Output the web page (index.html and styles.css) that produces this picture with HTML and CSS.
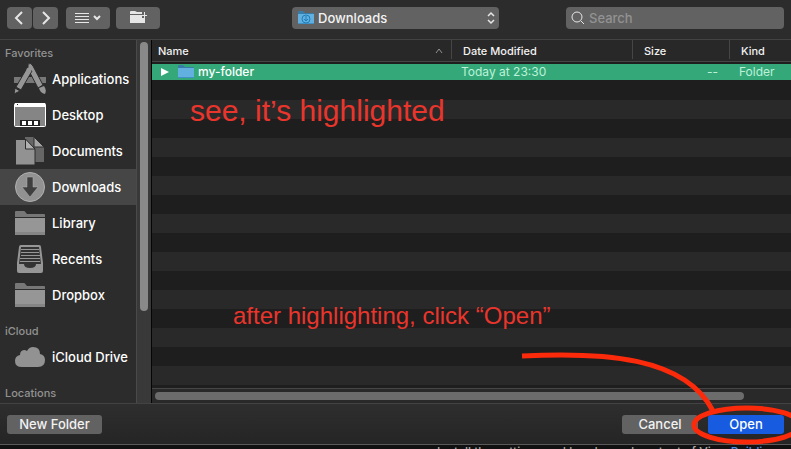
FILE: index.html
```html
<!DOCTYPE html>
<html lang="en">
<head>
<meta charset="utf-8">
<meta name="viewport" content="width=device-width, initial-scale=1">
<title>Open folder</title>
<link rel="stylesheet" href="styles.css">
</head>
<body>
<svg class="defs" aria-hidden="true">
  <symbol id="folder" viewBox="0 0 32 28">
    <path fill="#777" d="M1 8V3q0-1 1-1h8q1 0 2 2l1 1h17q1 0 1 1v2z"/>
    <path fill="#969696" d="M1 9h30v17H1z"/>
    <path fill="#858585" d="M1 23h30v2q0 1-1 1H2q-1 0-1-1z"/>
  </symbol>
  <symbol id="blue-folder" viewBox="0 0 16 14">
    <path fill="#377da8" d="M0 3V1q0-1 1-1h4l2 2h8q1 0 1 1v2H0z"/>
    <path fill="#62b0df" d="M0 3h16v10H0z"/>
    <path fill="#4291c4" d="M0 12h16v1H0z"/>
  </symbol>
</svg>
<main class="dialog">
  <header class="toolbar">
    <div class="nav">
      <button class="tool arrow" aria-label="Back"><svg width="24" height="22" viewBox="0 0 24 22"><path d="M15 5l-6 6 6 6"/></svg></button>
      <button class="tool arrow" aria-label="Forward"><svg width="24" height="22" viewBox="0 0 24 22"><path d="M10 5l6 6-6 6"/></svg></button>
    </div>
    <button class="tool wide" aria-label="View options"><svg width="44" height="22" viewBox="0 0 44 22"><path class="thin" d="M9 6.500h14M9 9.500h14M9 12.500h14M9 15.500h14"/><path d="M28 9l3 3 3-3"/></svg></button>
    <button class="tool wide" aria-label="New folder with selection"><svg width="44" height="22" viewBox="0 0 44 22"><path class="solid" d="M14 7V5q0-1 1-1h4l2 1h5v2zM14 8h12v3h3v5H14z"/><path class="thin" d="M28.500 5v6M26 8.500h5"/></svg></button>
    <div class="location">
      <svg class="location-icon" width="16" height="14" aria-hidden="true"><use href="#blue-folder"/><circle cx="8" cy="8" r="4" fill="none" stroke="#1c7fb9"/><path d="M8 5v5M6 8l2 2 2-2" fill="none" stroke="#1c7fb9"/></svg>
      <select aria-label="Location"><option>Downloads</option></select>
      <svg class="stepper" width="10" height="14" viewBox="0 0 10 14" aria-hidden="true"><path d="M2 5l3-3 3 3M2 9l3 3 3-3"/></svg>
    </div>
    <div class="search">
      <svg class="glass" width="14" height="14" viewBox="0 0 14 14" aria-hidden="true"><circle cx="6" cy="6" r="5"/><path d="M10 10l3 3"/></svg>
      <input type="search" placeholder="Search" aria-label="Search">
    </div>
  </header>
  <div class="body">
    <nav class="sidebar" aria-label="Places">
      <h2>Favorites</h2>
      <ul>
        <li><a href="#applications"><svg width="32" height="32" viewBox="0 0 32 32"><g fill="#969696"><path fill="#787878" d="M0 14h32v6H0z"/><path stroke="#2c2c2c" d="M14 1q3-2 5 2l10 19-5 3L14 6z"/><path d="M25 25l5-2q3 4 1 8-5-1-6-6z"/><path stroke="#2c2c2c" d="M13 5l5 3L7 27l-5-3zM1 25l5 3-6 3z"/><circle cx="15" cy="7" r="2.500"/></g></svg>Applications</a></li>
        <li><a href="#desktop"><svg width="32" height="32" viewBox="0 0 32 32"><rect x=".5" y="4.500" width="31" height="23" rx="1" fill="#858585" stroke="#fff"/><path fill="#fff" d="M1 4h30v4H1z"/><path fill="#222" d="M3 5h1v1H3zM6 21h20v6H6z"/><path fill="#fff" d="M8 22h4v4H8zM14 22h4v4h-4zM20 22h4v4h-4z"/></svg>Desktop</a></li>
        <li><a href="#documents"><svg width="32" height="32" viewBox="0 0 32 32"><path fill="#666" d="M11 2h9l10 10v15H11z"/><path fill="#a3a3a3" stroke="#2c2c2c" d="M20 2v10h10z"/><path fill="#929292" stroke="#2c2c2c" d="M1.500 4.500h10l9.500 9.500v16H1.500z"/><path fill="#b0b0b0" stroke="#2c2c2c" d="M11.500 4v10H21z"/></svg>Documents</a></li>
        <li class="current"><a href="#downloads" aria-current="page"><svg width="32" height="32" viewBox="0 0 32 32"><circle cx="16" cy="16" r="14.500" fill="#929292" stroke="#b0b0b0"/><path fill="#3f3f3f" stroke="#b0b0b0" stroke-width=".5" d="M13 6h6v10h5l-8 10-8-10h5z"/></svg>Downloads</a></li>
        <li><a href="#library"><svg width="32" height="28"><use href="#folder"/></svg>Library</a></li>
        <li><a href="#recents"><svg width="32" height="32" viewBox="0 0 32 32"><path fill="#969696" d="M7 2h18q2 0 2 2l2 16v8q0 2-2 2H5q-2 0-2-2v-8L5 4q0-2 2-2z"/><path fill="#333" d="M7 4h18l2 17h-5q0 4-6 4t-6-4H5z"/><path stroke="#969696" d="M7 6.500h18M7 9.500h18M7 12.500h19M6 15.500h20M6 18.500h20"/></svg>Recents</a></li>
        <li><a href="#dropbox"><svg width="32" height="28"><use href="#folder"/></svg>Dropbox</a></li>
      </ul>
      <h2>iCloud</h2>
      <ul>
        <li><a href="#icloud"><svg width="32" height="32" viewBox="0 0 32 32"><path fill="#929292" d="M8 26q-7 0-7-6 0-5 5-6 0-5 5-5l2 1q2-4 6-4 7 0 7 7 5 1 5 6 0 7-7 7z"/></svg>iCloud Drive</a></li>
      </ul>
      <h2>Locations</h2>
    </nav>
    <div class="track" aria-hidden="true"><div class="thumb"></div></div>
    <section class="files">
      <table>
        <colgroup><col><col class="c-date"><col class="c-size"><col class="c-kind"></colgroup>
        <thead>
          <tr><th scope="col" aria-sort="ascending"><span class="sorted">Name<svg width="8" height="6" viewBox="0 0 8 6" aria-hidden="true"><path d="M1 5l3-4 3 4"/></svg></span></th><th scope="col">Date Modified</th><th scope="col">Size</th><th scope="col">Kind</th></tr>
        </thead>
        <tbody>
          <tr>
            <td><span class="name"><button class="disclose" aria-label="Expand my-folder"><svg width="8" height="10" viewBox="0 0 8 10"><path fill="#fff" d="M0 1l8 4-8 4z"/></svg></button><svg width="16" height="14" aria-hidden="true"><use href="#blue-folder"/></svg>my-folder</span></td>
            <td>Today at 23:30</td><td class="num">--</td><td>Folder</td>
          </tr>
        </tbody>
      </table>
      <div class="stripes"></div>
      <div class="htrack" aria-hidden="true"><div class="hthumb"></div></div>
      <p class="note note-top">see, it’s highlighted</p>
      <p class="note note-bottom">after highlighting, click “Open”</p>
    </section>
  </div>
  <footer class="actions">
    <button class="push">New Folder</button>
    <button class="push cancel">Cancel</button>
    <button class="push primary">Open</button>
  </footer>
  <svg class="marker" width="280" height="100" viewBox="0 0 280 100" aria-hidden="true"><path d="M11 7C90 3 174 7 202 62"/><ellipse cx="236" cy="76" rx="53" ry="17"/></svg>
</main>
<div class="behind">Install the settings and header and content of View <a href="#builder">Building</a></div>
</body>
</html>
```
FILE: styles.css
```css
* { box-sizing: border-box; }
body {
  margin: 0;
  height: 100vh;
  display: flex;
  flex-direction: column;
  overflow: hidden;
  background: #111;
  color: #f2f2f2;
  font: 500 13px/16px Inter, "Liberation Sans", sans-serif;
}
button, input, select { font: inherit; color: inherit; border: 0; margin: 0; padding: 0; }
svg { display: block; flex: none; }
a { color: inherit; text-decoration: none; }
.defs { position: absolute; width: 0; height: 0; }

.dialog {
  position: relative;
  flex: 1;
  min-height: 0;
  display: flex;
  flex-direction: column;
  background: #2c2c2c;
  border-bottom: 1px solid #5a5a5a;
}

.toolbar {
  display: flex;
  align-items: center;
  height: 40px;
  padding: 0 7px 4px;
  border-bottom: 1px solid #434343;
}
.nav { display: flex; gap: 1px; }
.tool {
  height: 22px;
  border-radius: 4px;
  background: #626262;
  margin-right: 6px;
}
.arrow { width: 25px; margin: 0; }
.wide { width: 44px; }
.nav + .wide { margin-left: 8px; }
.tool path { fill: none; stroke: #e6e6e6; stroke-width: 2; }
.tool .thin { stroke-width: 1; }
.tool .solid { fill: #e6e6e6; stroke: none; }

.location { position: relative; width: 207px; margin: 0 67px 0 auto; }
.location select {
  display: block;
  appearance: none;
  width: 100%;
  height: 22px;
  padding-left: 26px;
  border-radius: 4px;
  background: #626262;
}
.location-icon { position: absolute; left: 6px; top: 4px; }
.stepper { position: absolute; right: 3px; top: 4px; }
.stepper path { fill: none; stroke: #e6e6e6; stroke-width: 1.5; }
.search { position: relative; width: 218px; }
.search input {
  display: block;
  width: 100%;
  height: 22px;
  padding-left: 23px;
  border-radius: 4px;
  background: #626262;
}
.search input::placeholder { color: #929292; opacity: 1; }
.glass { position: absolute; left: 5px; top: 4px; }
.glass * { fill: none; stroke: #e6e6e6; stroke-width: 1; }

.body { flex: 1; min-height: 0; display: flex; }
.sidebar { width: 136px; padding-top: 5px; overflow: hidden; background: #2c2c2c; }
.sidebar h2 {
  margin: 0;
  padding-left: 5px;
  color: #929292;
  font: 500 11px/16px Inter, "Liberation Sans", sans-serif;
}
.sidebar ul { margin: 0 0 10px; padding: 0; list-style: none; }
.sidebar li a {
  display: flex;
  align-items: center;
  gap: 6px;
  height: 36px;
  padding-left: 14px;
  white-space: nowrap;
  color: #fff;
}
.sidebar .current { background: #464646; }
.track {
  width: 16px;
  padding: 2px 3px;
  background: #393939;
  border-left: 1px solid #4a4a4a;
  border-right: 1px solid #050505;
}
.thumb { width: 8px; height: 75%; border-radius: 4px; background: #898989; }

.files { position: relative; flex: 1; min-width: 0; display: flex; flex-direction: column; }
table { width: 100%; table-layout: fixed; border-collapse: separate; border-spacing: 0; background: #1e1e1e; }
.c-date { width: 181px; }
.c-size { width: 97px; }
.c-kind { width: 62px; }
th, td { padding: 0; text-align: left; white-space: nowrap; }
th {
  height: 22px;
  padding-left: 12px;
  background: #282828;
  border-bottom: 1px solid #464646;
  font-size: 11px;
  font-weight: 500;
}
th:first-child { padding-left: 6px; }
th + th { background: linear-gradient(#464646, #464646) 0 0 / 1px 19px no-repeat #282828; }
.sorted { display: flex; align-items: center; justify-content: space-between; padding-right: 8px; }
.sorted path { fill: none; stroke: #929292; }
td {
  height: 19px;
  padding-left: 10px;
  border-top: 2px solid #1e1e1e;
  border-bottom: 1px solid #1e1e1e;
  background: #34a878;
  color: #bdf2da;
  font-size: 12px;
  font-weight: 400;
}
td:first-child { padding-left: 9px; color: #fff; font-weight: 500; }
td.num { text-align: right; padding-right: 11px; }
.name { display: flex; align-items: center; gap: 4px; }
.disclose { width: 13px; background: none; }
.stripes {
  flex: 1;
  background: repeating-linear-gradient(#1e1e1e 0 19px, #292929 19px 38px);
}
.htrack { height: 15px; padding: 3px; background: #292929; border-top: 1px solid #464646; }
.hthumb { width: 93%; height: 8px; border-radius: 4px; background: #6c6c6c; }

.note {
  position: absolute;
  margin: 0;
  color: #ea352c;
  font-family: "Liberation Sans", sans-serif;
  font-weight: 400;
  white-space: nowrap;
}
.note-top { left: 38px; top: 53px; font-size: 30px; line-height: 36px; }
.note-bottom { left: 81px; top: 262px; font-size: 24px; line-height: 28px; }

.actions {
  display: flex;
  align-items: center;
  height: 41px;
  padding: 0 7px;
  border-top: 1px solid #434343;
  background: linear-gradient(#2e2e2e, #252525);
}
.push { width: 76px; height: 19px; border-radius: 3px; background: #626262; }
.push:first-child { width: 95px; }
.cancel { margin: 0 10px 0 auto; }
.primary { background: #165be0; color: #fff; }
.marker { position: absolute; right: 0; bottom: -5px; pointer-events: none; }
.marker * { fill: none; stroke: #fb2a0b; stroke-width: 5; }

.behind {
  height: 4px;
  overflow: hidden;
  padding-right: 14px;
  text-align: right;
  color: #aaa;
  font-size: 12px;
  line-height: 14px;
}
.behind a { color: #4a8be8; }
```
